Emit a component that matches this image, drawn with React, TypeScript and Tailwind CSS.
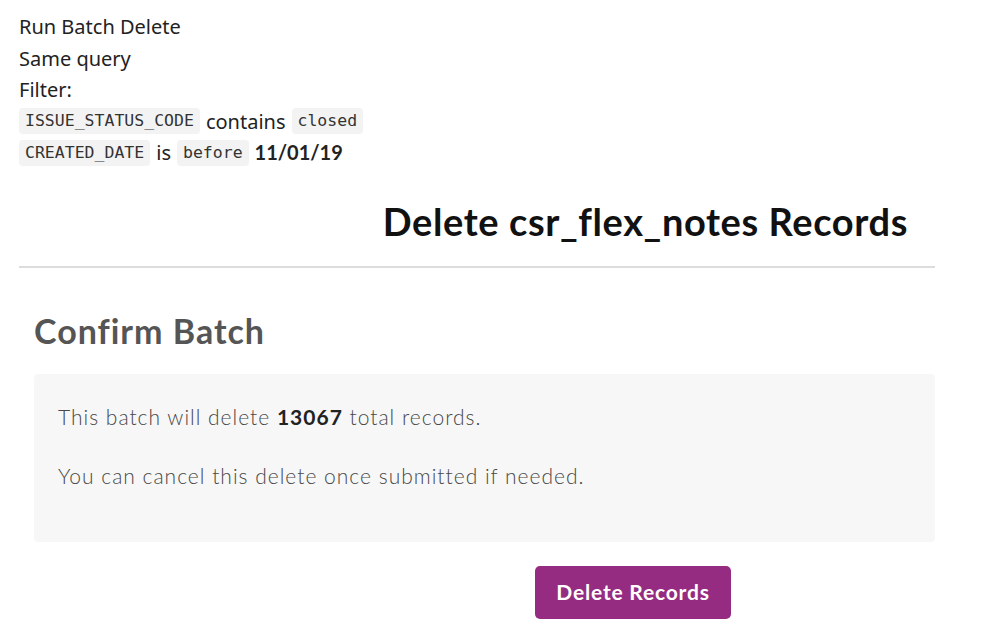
import React from "react";

const Code = ({ children }: { children: React.ReactNode }) => (
  <code className="inline-block rounded-[4px] bg-[#f3f3f3] px-[6px] leading-[26px] text-[16.5px] text-[#333] [font-family:'DejaVu_Sans_Mono',monospace] align-middle">
    {children}
  </code>
);

export default function App() {
  return (
    <div className="min-h-[640px] w-[1000px] bg-white">
      <div className="w-[916px] ml-[19px] pt-[11px]">
        <div className="text-[20px] leading-[31.5px] text-[#222] [font-family:'Noto_Sans',sans-serif]">
          <div>Run Batch Delete</div>
          <div>Same query</div>
          <div>Filter:</div>
          <div className="flex items-center gap-[6px] h-[31.5px]">
            <Code>ISSUE_STATUS_CODE</Code>
            <span>contains</span>
            <Code>closed</Code>
          </div>
          <div className="flex items-center gap-[6px] h-[31.5px]">
            <Code>CREATED_DATE</Code>
            <span>is</span>
            <Code>before</Code>
            <span className="[font-family:Lato,sans-serif] font-bold text-[#222]">11/01/19</span>
          </div>
        </div>

        <h1 className="mt-[29px] text-right pr-[27px] text-[38px] leading-[46px] font-bold tracking-[0.6px] text-[#111] [font-family:Lato,sans-serif]">
          Delete csr_flex_notes Records
        </h1>

        <div className="mt-[22px] h-[2px] bg-[#dcdcdc]" />

        <div className="pl-[15px] [font-family:Lato,sans-serif]">
          <h2 className="mt-[43px] text-[34px] leading-[40px] font-bold tracking-[1px] text-[#555]">
            Confirm Batch
          </h2>
          <div className="mt-[23px] h-[168px] rounded-[4px] bg-[#f7f7f7] px-[24px] pt-[30px] text-[21px] font-light tracking-[1px] text-[#484848]">
            <p className="leading-[26px]">
              This batch will delete <b className="font-bold text-[#222]">13067</b> total records.
            </p>
            <p className="mt-[33px] leading-[26px]">
              You can cancel this delete once submitted if needed.
            </p>
          </div>
          <div className="mt-[24px] pl-[501px]">
            <button className="w-[196px] h-[53px] rounded-[5px] bg-[#952c81] text-white text-[21px] font-bold tracking-[0.8px]">
              Delete Records
            </button>
          </div>
        </div>
      </div>
    </div>
  );
}
